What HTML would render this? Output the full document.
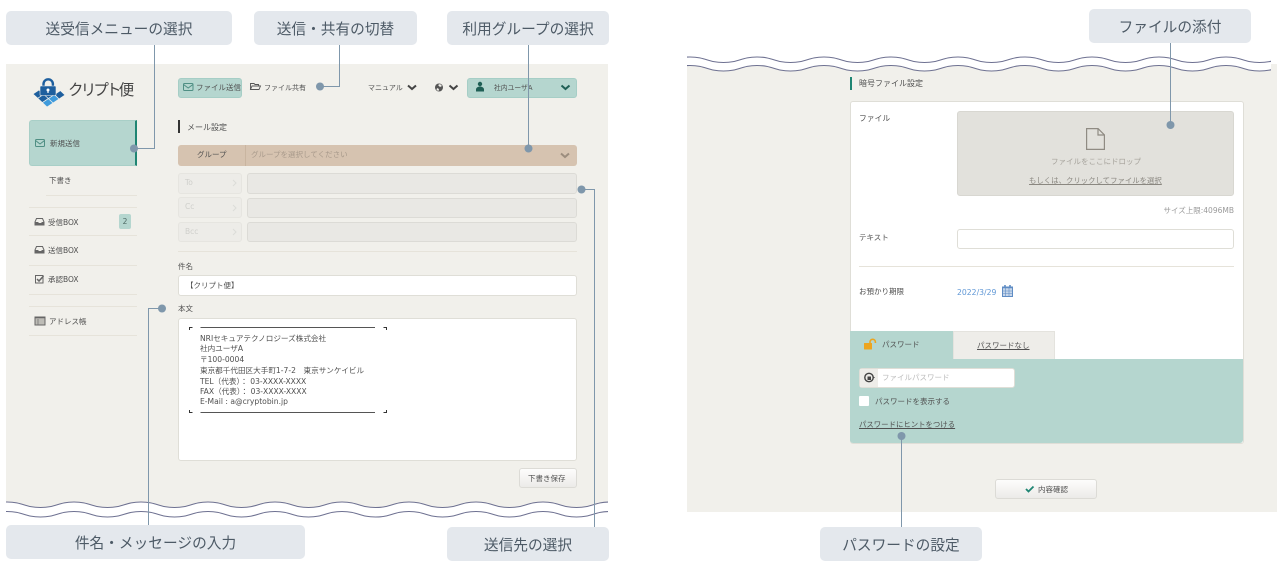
<!DOCTYPE html>
<html lang="ja"><head><meta charset="utf-8"><title>クリプト便</title>
<style>
*{box-sizing:border-box}
html{overflow:hidden;width:1285px;height:564px}
html,body{margin:0;padding:0;background:#fff}
body{position:relative;width:1285px;height:564px;overflow:hidden;font-family:"DejaVu Sans","Noto Sans CJK JP",sans-serif;color:#555}
.b{position:absolute}
.t{position:absolute;white-space:nowrap;font-size:7.5px;line-height:12px;color:#505050;margin-top:1px}
.c{position:absolute;background:#e4e8ed;border-radius:5px;height:34px;display:flex;align-items:center;justify-content:center;font-family:"Liberation Sans","Noto Sans CJK JP",sans-serif;font-size:14.7px;color:#4d5a66;white-space:nowrap}
.hr{position:absolute;height:1px;background:#e6e3da}
.f{position:absolute;background:#e9e8e4;border:1px solid #dcdbd6;border-radius:3px}
.l{position:absolute;background:#edecE8;border:1px solid #e6e5e0;border-radius:3px;color:#cfcfcb;font-size:7.5px;line-height:18px;padding-left:6px}
.w{position:absolute;background:#fff;border:1px solid #dfded7;border-radius:3px}
.btn{position:absolute;background:linear-gradient(#fdfdfc,#ecebe8);border:1px solid #dcdbd6;border-radius:3px}
.s{font-size:7.6px}
</style></head><body>
<div class="b" style="left:6px;top:64px;width:602px;height:450px;background:#f1f0eb"></div>
<div class="b" style="left:687px;top:64px;width:590px;height:448px;background:#f1f0eb"></div>

<svg class="b" style="left:0;top:0" width="1285" height="564" viewBox="0 0 1285 564" fill="none">
<svg x="6" y="490" width="602" height="74" fill="none">
<path transform="translate(-32.5,17.5)" fill="#fff" stroke="none" d="M0 0c16 0 17.500-5.500 33.500-5.500s17.500 5.500 33.500 5.500s17.500-5.500 33.500-5.500s17.500 5.500 33.500 5.500s17.500-5.500 33.500-5.500s17.500 5.500 33.500 5.500s17.500-5.500 33.500-5.500s17.500 5.500 33.500 5.500s17.500-5.500 33.500-5.500s17.500 5.500 33.500 5.500s17.500-5.500 33.500-5.500s17.500 5.500 33.500 5.500s17.500-5.500 33.500-5.500s17.500 5.500 33.500 5.500s17.500-5.500 33.500-5.500s17.500 5.500 33.500 5.500s17.500-5.500 33.500-5.500s17.500 5.500 33.500 5.500s17.500-5.500 33.500-5.500s17.500 5.500 33.500 5.500V57H0Z"/>
<path transform="translate(-32.5,17.5)" stroke="#6e7191" stroke-width="1.1" d="M0 0c16 0 17.500-5.500 33.500-5.500s17.500 5.500 33.500 5.500s17.500-5.500 33.500-5.500s17.500 5.500 33.500 5.500s17.500-5.500 33.500-5.500s17.500 5.500 33.500 5.500s17.500-5.500 33.500-5.500s17.500 5.500 33.500 5.500s17.500-5.500 33.500-5.500s17.500 5.500 33.500 5.500s17.500-5.500 33.500-5.500s17.500 5.500 33.500 5.500s17.500-5.500 33.500-5.500s17.500 5.500 33.500 5.500s17.500-5.500 33.500-5.500s17.500 5.500 33.500 5.500s17.500-5.500 33.500-5.500s17.500 5.500 33.500 5.500s17.500-5.500 33.500-5.500s17.500 5.500 33.500 5.500"/>
<path transform="translate(-32.5,27)" stroke="#6e7191" stroke-width="1.1" d="M0 0c16 0 17.500-5.500 33.500-5.500s17.500 5.500 33.500 5.500s17.500-5.500 33.500-5.500s17.500 5.500 33.500 5.500s17.500-5.500 33.500-5.500s17.500 5.500 33.500 5.500s17.500-5.500 33.500-5.500s17.500 5.500 33.500 5.500s17.500-5.500 33.500-5.500s17.500 5.500 33.500 5.500s17.500-5.500 33.500-5.500s17.500 5.500 33.500 5.500s17.500-5.500 33.500-5.500s17.500 5.500 33.500 5.500s17.500-5.500 33.500-5.500s17.500 5.500 33.500 5.500s17.500-5.500 33.500-5.500s17.500 5.500 33.500 5.500s17.500-5.500 33.500-5.500s17.500 5.500 33.500 5.500"/>
</svg>
<svg x="687" y="40" width="584" height="40" fill="none">
<path transform="translate(-30.5,31)" fill="#fff" stroke="none" d="M0 0c16 0 17.500-5.500 33.500-5.500s17.500 5.500 33.500 5.500s17.500-5.500 33.500-5.500s17.500 5.500 33.500 5.500s17.500-5.500 33.500-5.500s17.500 5.500 33.500 5.500s17.500-5.500 33.500-5.500s17.500 5.500 33.500 5.500s17.500-5.500 33.500-5.500s17.500 5.500 33.500 5.500s17.500-5.500 33.500-5.500s17.500 5.500 33.500 5.500s17.500-5.500 33.500-5.500s17.500 5.500 33.500 5.500s17.500-5.500 33.500-5.500s17.500 5.500 33.500 5.500s17.500-5.500 33.500-5.500s17.500 5.500 33.500 5.500s17.500-5.500 33.500-5.500s17.500 5.500 33.500 5.500V-31H0Z"/>
<path transform="translate(-30.5,31)" stroke="#6e7191" stroke-width="1.1" d="M0 0c16 0 17.500-5.500 33.500-5.500s17.500 5.500 33.500 5.500s17.500-5.500 33.500-5.500s17.500 5.500 33.500 5.500s17.500-5.500 33.500-5.500s17.500 5.500 33.500 5.500s17.500-5.500 33.500-5.500s17.500 5.500 33.500 5.500s17.500-5.500 33.500-5.500s17.500 5.500 33.500 5.500s17.500-5.500 33.500-5.500s17.500 5.500 33.500 5.500s17.500-5.500 33.500-5.500s17.500 5.500 33.500 5.500s17.500-5.500 33.500-5.500s17.500 5.500 33.500 5.500s17.500-5.500 33.500-5.500s17.500 5.500 33.500 5.500s17.500-5.500 33.500-5.500s17.500 5.500 33.500 5.500"/>
<path transform="translate(-30.5,22.5)" stroke="#6e7191" stroke-width="1.1" d="M0 0c16 0 17.500-5.500 33.500-5.500s17.500 5.500 33.500 5.500s17.500-5.500 33.500-5.500s17.500 5.500 33.500 5.500s17.500-5.500 33.500-5.500s17.500 5.500 33.500 5.500s17.500-5.500 33.500-5.500s17.500 5.500 33.500 5.500s17.500-5.500 33.500-5.500s17.500 5.500 33.500 5.500s17.500-5.500 33.500-5.500s17.500 5.500 33.500 5.500s17.500-5.500 33.500-5.500s17.500 5.500 33.500 5.500s17.500-5.500 33.500-5.500s17.500 5.500 33.500 5.500s17.500-5.500 33.500-5.500s17.500 5.500 33.500 5.500s17.500-5.500 33.500-5.500s17.500 5.500 33.500 5.500"/>
</svg>
</svg>

<div class="c" style="left:6px;top:11px;width:226px">送受信メニューの選択</div>
<div class="c" style="left:254px;top:11px;width:163px">送信・共有の切替</div>
<div class="c" style="left:447px;top:11px;width:162px">利用グループの選択</div>
<div class="c" style="left:1089px;top:9px;width:162px">ファイルの添付</div>
<div class="c" style="left:6px;top:525px;width:299px">件名・メッセージの入力</div>
<div class="c" style="left:447px;top:527px;width:162px">送信先の選択</div>
<div class="c" style="left:820px;top:527px;width:162px">パスワードの設定</div>

<!-- left nav -->
<div class="b" style="left:29px;top:120px;width:108px;height:46px;background:#b5d6cf;border:1px solid #a8cfc7;border-right:2px solid #1f8573;border-radius:3px 0 0 3px"></div>
<div class="t" style="left:50px;top:137px">新規送信</div>
<div class="t" style="left:49px;top:174px">下書き</div>
<div class="hr" style="left:46px;top:195px;width:91px"></div>
<div class="hr" style="left:29px;top:207px;width:108px"></div>
<div class="t" style="left:48px;top:216px">受信BOX</div>
<div class="b" style="left:119px;top:214px;width:12px;height:15px;background:#b5d6cf;border-radius:2px;font-size:7.5px;line-height:15px;text-align:center;color:#4f6b66">2</div>
<div class="hr" style="left:29px;top:235px;width:108px"></div>
<div class="t" style="left:48px;top:244px">送信BOX</div>
<div class="hr" style="left:29px;top:265px;width:108px"></div>
<div class="t" style="left:48px;top:273px">承認BOX</div>
<div class="hr" style="left:29px;top:294px;width:108px"></div>
<div class="hr" style="left:29px;top:306px;width:108px"></div>
<div class="t" style="left:49px;top:315px">アドレス帳</div>
<div class="hr" style="left:29px;top:335px;width:108px"></div>
<div class="t" style="left:68px;top:80px;font-size:15.5px;line-height:20px;color:#444;font-family:'Liberation Sans','Noto Sans CJK JP',sans-serif;letter-spacing:-2.8px">クリプト便</div>

<!-- header -->
<div class="b" style="left:178px;top:78px;width:64px;height:20px;background:#b5d6cf;border:1px solid #a6cec6;border-radius:3px"></div>
<div class="t" style="left:196px;top:81px">ファイル送信</div>
<div class="t" style="left:264px;top:81px;font-size:7px">ファイル共有</div>
<div class="t" style="left:368px;top:81px;font-size:7px">マニュアル</div>
<div class="b" style="left:467px;top:78px;width:110px;height:20px;background:#b5d6cf;border:1px solid #a6cec6;border-radius:3px"></div>
<div class="t" style="left:494px;top:81px;font-size:6.8px">社内ユーザA</div>

<!-- form -->
<div class="t" style="left:187px;top:121px;font-size:8px">メール設定</div>
<div class="b" style="left:178px;top:145px;width:399px;height:21px;background:#d6c3b0;border-radius:3px"></div>
<div class="b" style="left:245px;top:145px;width:1px;height:21px;background:#c9b5a0"></div>
<div class="t" style="left:197px;top:148px">グループ</div>
<div class="t" style="left:251px;top:148px;color:#a89a8b">グループを選択してください</div>
<div class="l" style="left:178px;top:173px;width:64px;height:21px">To</div>
<div class="f" style="left:247px;top:173px;width:330px;height:21px"></div>
<div class="l" style="left:178px;top:197px;width:64px;height:21px">Cc</div>
<div class="f" style="left:247px;top:198px;width:330px;height:20px"></div>
<div class="l" style="left:178px;top:222px;width:64px;height:20px">Bcc</div>
<div class="f" style="left:247px;top:222px;width:330px;height:20px"></div>
<div class="hr" style="left:178px;top:251px;width:399px"></div>
<div class="t" style="left:178px;top:260px">件名</div>
<div class="w" style="left:178px;top:275px;width:399px;height:21px"></div>
<div class="t" style="left:186px;top:279px">【クリプト便】</div>
<div class="t" style="left:178px;top:302px">本文</div>
<div class="w" style="left:178px;top:318px;width:399px;height:143px"></div>
<div class="t s" style="left:200px;top:332px">NRIセキュアテクノロジーズ株式会社</div>
<div class="t s" style="left:200px;top:342px">社内ユーザA</div>
<div class="t s" style="left:200px;top:353px">〒100-0004</div>
<div class="t s" style="left:200px;top:364px">東京都千代田区大手町1-7-2　東京サンケイビル</div>
<div class="t s" style="left:200px;top:375px">TEL（代表）： 03-XXXX-XXXX</div>
<div class="t s" style="left:200px;top:385px">FAX（代表）： 03-XXXX-XXXX</div>
<div class="t s" style="left:200px;top:395px">E-Mail : a@cryptobin.jp</div>
<div class="btn" style="left:519px;top:468px;width:58px;height:20px"></div>
<div class="t" style="left:528px;top:472px">下書き保存</div>

<!-- right -->
<div class="t" style="left:859px;top:77px;font-size:8px">暗号ファイル設定</div>
<div class="b" style="left:850px;top:101px;width:394px;height:343px;background:#fff;border:1px solid #dfded7;border-radius:3px"></div>
<div class="t" style="left:859px;top:112px;font-size:7.8px">ファイル</div>
<div class="b" style="left:957px;top:111px;width:277px;height:85px;background:#e2e1dc;border:1px solid #d8d7d1;border-radius:3px"></div>
<div class="t" style="left:1051px;top:155px;color:#a5a29b">ファイルをここにドロップ</div>
<div class="t" style="left:1029px;top:174px;color:#8a8780;text-decoration:underline;font-size:7.4px">もしくは、クリックしてファイルを選択</div>
<div class="t" style="right:51px;top:204px;color:#9a9a9a">サイズ上限:4096MB</div>
<div class="t" style="left:859px;top:231px">テキスト</div>
<div class="w" style="left:957px;top:229px;width:277px;height:20px"></div>
<div class="hr" style="left:859px;top:266px;width:375px"></div>
<div class="t" style="left:859px;top:285px">お預かり期限</div>
<div class="t" style="left:957px;top:286px;color:#5f97d6;font-size:7.7px">2022/3/29</div>
<div class="b" style="left:850px;top:359px;width:393px;height:84px;background:#b5d6cf;border-radius:0 0 3px 3px"></div>
<div class="b" style="left:850px;top:331px;width:103px;height:29px;background:#b5d6cf"></div>
<div class="b" style="left:953px;top:331px;width:102px;height:28px;background:#eeede9;border:1px solid #e4e3de;border-bottom:0"></div>
<div class="t" style="left:882px;top:338px">パスワード</div>
<div class="t" style="left:977px;top:339px;text-decoration:underline">パスワードなし</div>
<div class="b" style="left:859px;top:368px;width:156px;height:20px;background:#fff;border:1px solid #dfded7;border-radius:3px"></div>
<div class="b" style="left:860px;top:369px;width:18px;height:18px;background:#eeede9"></div>
<div class="t" style="left:882px;top:371px;color:#bbb">ファイルパスワード</div>
<div class="b" style="left:859px;top:396px;width:10px;height:10px;background:#fff;border-radius:1px"></div>
<div class="t" style="left:875px;top:395px">パスワードを表示する</div>
<div class="t" style="left:859px;top:418px;text-decoration:underline;font-size:7.4px">パスワードにヒントをつける</div>
<div class="btn" style="left:995px;top:479px;width:102px;height:20px"></div>
<div class="t" style="left:1038px;top:483px">内容確認</div>

<svg class="b" style="left:0;top:0" width="1285" height="564" viewBox="0 0 1285 564" fill="none">
<!-- logo -->
<g stroke="#f1f0eb" stroke-width=".7">
<path fill="#1e5f9e" d="M33 94l4.700 4.300 6-4-4.700-4.300zM37.700 98.300l4.700 4.300 6-4-4.700-4.300zM43.700 94.300l4.700 4.300 6-4-4.700-4.300z"/>
<path fill="#1e5f9e" d="M54.400 94.600l4.600 4.400 6-4-4.600-4.400z"/>
<path fill="#3f9bdc" d="M42.400 102.600l4.600 4.400 6-4-4.600-4.400zM48.400 98.600l4.600 4.400 6-4-4.600-4.400z"/>
</g>
<path d="M43.500 87v-3a4.700 4.700 0 0 1 9.400 0v3" stroke="#1e5f9e" stroke-width="2.400"/>
<rect x="40" y="86" width="16" height="9.500" rx="1" fill="#1e5f9e" stroke="#f1f0eb" stroke-width=".6"/>
<circle cx="48" cy="90" r="1.500" fill="#fff"/><rect x="47.400" y="90" width="1.200" height="3" fill="#fff"/>

<!-- nav icons -->
<g stroke="#4f8f84" stroke-width="1"><rect x="35.500" y="139.500" width="9" height="7" rx="1"/><path d="M35.500 140.500l4.500 3.500 4.500-3.500"/></g>
<g stroke="#666"><path stroke-width="1" d="M35 222l1.500-3.500h6l1.500 3.500v3h-9z"/><path fill="#666" stroke="none" d="M35 222h3l1 1h2l1-1h2.500v3.500h-9.500z"/>
<path stroke-width="1" d="M35 250l1.500-3.500h6l1.500 3.500v3h-9z"/><path fill="#666" stroke="none" d="M35 250h3l1 1h2l1-1h2.500v3.500h-9.500z"/>
<rect x="35.500" y="275.500" width="7.500" height="7.500" stroke-width="1"/><path stroke-width="1.500" d="M37 279l2 2 4.500-5"/>
<rect x="35" y="317" width="10" height="8" fill="#bdbcb6" stroke-width="1"/><path stroke-width="1.500" d="M35 317.500h10"/><path stroke-width=".8" d="M38 319v6" stroke="#777"/></g>

<!-- header icons -->
<g stroke="#4f8f84" stroke-width="1"><rect x="183.500" y="83.500" width="9.500" height="7" rx="1"/><path d="M183.500 84.500l4.700 3.500 4.700-3.500"/></g>
<path stroke="#555" stroke-width=".9" d="M250.500 89.500v-6h3.500l1 1h3.500v1.500M250.500 89.500l1.500-3.500h8.500l-1.500 3.500z"/>
<path stroke="#444" stroke-width="2" d="M408 85.500l4 3.500 4-3.500M449.500 85.500l4 3.500 4-3.500"/>
<circle cx="439" cy="87.500" r="4" fill="#555"/><path fill="#f1f0eb" d="M438 85l2-1 2 2-2 1zM437 88l2 1-.5 2-2-1z"/>
<circle cx="480" cy="84" r="2.200" fill="#1f5f55"/><path fill="#1f5f55" d="M476 91.500v-2c0-1.800 2-3 4-3s4 1.200 4 3v2z"/>
<path stroke="#1f5f55" stroke-width="2" d="M561.500 85.500l4 3.500 4-3.500"/>

<!-- form details -->
<rect x="178" y="120" width="2" height="13" fill="#333"/>
<path stroke="#9c8d7e" stroke-width="2" d="M561 153.500l4 3.500 4-3.500"/>
<path stroke="#dcdcd8" stroke-width="1" d="M233 180l3 3-3 3M233 205l3 3-3 3M233 229l3 3-3 3"/>
<path stroke="#555" stroke-width="1" d="M200.500 327.500h174.500M200.500 412.500h174.500"/>
<path stroke="#333" stroke-width="1" d="M189.500 330v-2.500h3M383.500 327.500h3v2.500M189.500 410v2.500h3M383.500 412.500h3v-2.500"/>

<!-- right details -->
<rect x="850" y="77" width="2" height="13" fill="#1f8573"/>
<path stroke="#8f8b83" stroke-width="1.200" fill="none" d="M1086.600 128.600h11.500l6.300 6.300v14.500h-17.800zM1098 129v6h6"/>
<rect x="1002.500" y="287" width="10" height="9.500" fill="#c7d6ea" stroke="#5f8cc4" stroke-width="1"/>
<path stroke="#5f8cc4" stroke-width="1.600" d="M1002 287.500h11M1005 285v2M1010 285v2"/><path stroke="#5f8cc4" stroke-width=".6" d="M1002.500 291h10M1002.500 293.500h10M1005.500 288v8M1009 288v8"/>
<rect x="864" y="343" width="8" height="6.500" rx=".5" fill="#eda51f"/><path stroke="#eda51f" stroke-width="1.600" d="M870 343.500v-1.500a2.700 2.700 0 0 1 5.400 0v1"/>
<circle cx="869" cy="377.500" r="4.200" stroke="#444" stroke-width="1.400"/><rect x="867.500" y="376.500" width="3.500" height="3.500" fill="#444"/><path fill="#444" d="M872.500 376l2.500 1.500-2.500 1.500z"/>
<path stroke="#1f8573" stroke-width="1.800" d="M1026 489l2.500 2.500 5-5"/>

<!-- callout lines -->
<g stroke="#7f97ab" stroke-width="1">
<path d="M154.500 45v103.500H134"/>
<path d="M339.500 45v41.500H320"/>
<path d="M528.500 45v103"/>
<path d="M581 189.500h13.500V527"/>
<path d="M162 308.500h-13.500V525"/>
<path d="M1170.500 43v82"/>
<path d="M901.500 436v91"/>
</g>
<g fill="#7f97ab">
<circle cx="134" cy="148.500" r="4"/><circle cx="320" cy="86.500" r="4"/><circle cx="528.500" cy="148.500" r="4"/><circle cx="581.500" cy="189.500" r="4"/><circle cx="162" cy="308.500" r="4"/><circle cx="1170.500" cy="125" r="4"/><circle cx="901.500" cy="436" r="4"/>
</g>
</svg>
</body></html>
